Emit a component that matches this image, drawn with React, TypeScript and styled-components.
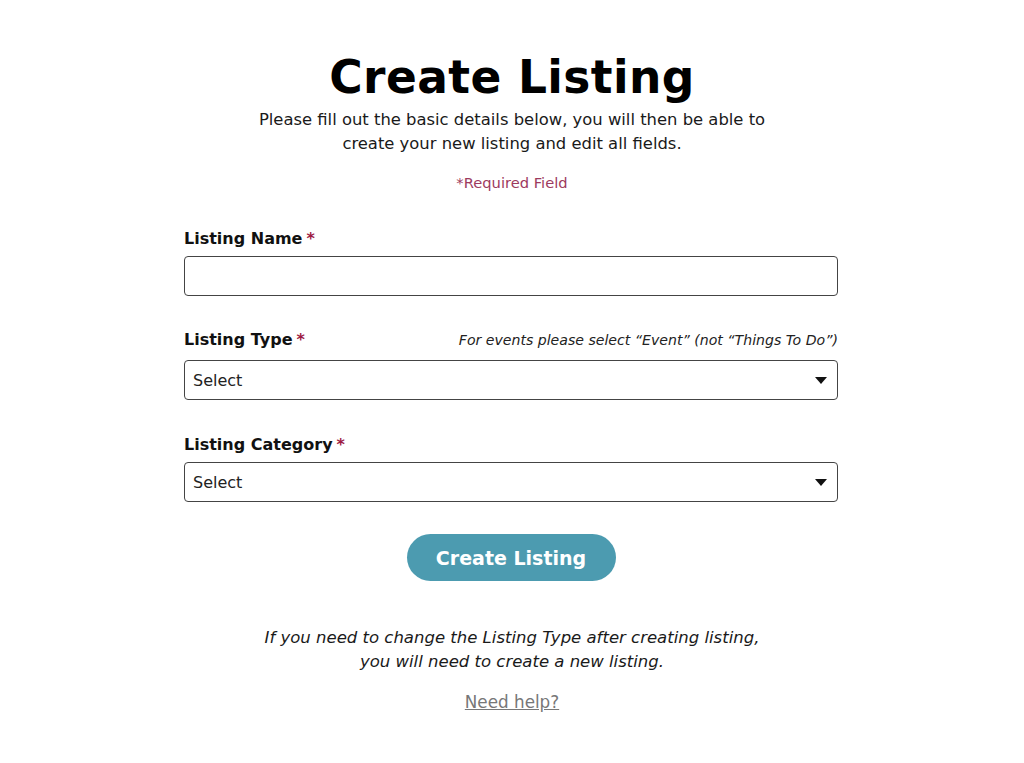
import React from "react";
import styled, { createGlobalStyle } from "styled-components";

const Global = createGlobalStyle`
  html, body { margin: 0; padding: 0; background: #fff; }
  body { font-family: "DejaVu Sans", "Open Sans", sans-serif; color: #111; }
  * { box-sizing: border-box; }
`;

const Page = styled.main`
  display: flex;
  flex-direction: column;
  align-items: center;
  padding-top: 48px;
`;

const Title = styled.h1`
  margin: 0;
  font-size: 45.5px;
  font-weight: 700;
  line-height: 60px;
  color: #000;
  letter-spacing: 0.4px;
`;

const Intro = styled.p`
  margin: 0;
  font-size: 16.4px;
  line-height: 24px;
  text-align: center;
  color: #1a1a1a;
`;

const Required = styled.p`
  margin: 17px 0 0;
  font-size: 14.7px;
  line-height: 20px;
  color: #9d3a5e;
`;

const Form = styled.form`
  width: 654px;
  margin-top: 35px;
  margin-right: 2px;
  display: flex;
  flex-direction: column;
`;

const Field = styled.div<{ $gap?: number }>`
  display: flex;
  flex-direction: column;
  margin-bottom: ${(p) => p.$gap ?? 32}px;
`;

const LabelRow = styled.div<{ $space?: number }>`
  display: flex;
  justify-content: space-between;
  align-items: baseline;
  margin-bottom: ${(p) => p.$space ?? 6}px;
`;

const Label = styled.label`
  font-size: 16px;
  font-weight: 700;
  line-height: 22px;
  color: #111;
`;

const Star = styled.span`
  color: #9d1a44;
  margin-left: 4px;
`;

const Hint = styled.span`
  font-size: 14.1px;
  font-style: italic;
  color: #222;
`;

const TextInput = styled.input`
  height: 40px;
  width: 100%;
  border: 1.5px solid #444;
  border-radius: 4px;
  padding: 0 9px;
  font-family: inherit;
  font-size: 16px;
  background: #fff;
`;

const SelectBox = styled.div`
  position: relative;
  height: 40px;
  border: 1.5px solid #444;
  border-radius: 4px;
  display: flex;
  align-items: center;
  justify-content: space-between;
  padding: 0 10px 0 8px;
  font-size: 16px;
  color: #222;
  background: #fff;
`;

const Caret = styled.span`
  width: 0;
  height: 0;
  border-left: 6px solid transparent;
  border-right: 6px solid transparent;
  border-top: 7px solid #111;
`;

const ButtonRow = styled.div`
  display: flex;
  justify-content: center;
`;

const Button = styled.button`
  width: 209px;
  height: 47px;
  border: none;
  border-radius: 24px;
  background: #4c9bb0;
  color: #fff;
  font-family: inherit;
  font-size: 19px;
  font-weight: 700;
  cursor: pointer;
`;

const Note = styled.p`
  margin: 45px 0 0;
  font-size: 16.5px;
  line-height: 24px;
  font-style: italic;
  text-align: center;
  color: #1a1a1a;
`;

const Help = styled.a`
  margin-top: 17px;
  font-size: 16.8px;
  line-height: 22px;
  color: #777;
  text-decoration: underline;
`;

export default function App() {
  return (
    <>
      <Global />
      <Page>
        <Title>Create Listing</Title>
        <Intro>
          Please fill out the basic details below, you will then be able to
          <br />
          create your new listing and edit all fields.
        </Intro>
        <Required>*Required Field</Required>
        <Form onSubmit={(e) => e.preventDefault()}>
          <Field $gap={33}>
            <LabelRow>
              <Label>
                Listing Name<Star>*</Star>
              </Label>
            </LabelRow>
            <TextInput type="text" />
          </Field>
          <Field $gap={34}>
            <LabelRow $space={9}>
              <Label>
                Listing Type<Star>*</Star>
              </Label>
              <Hint>For events please select “Event” (not “Things To Do”)</Hint>
            </LabelRow>
            <SelectBox>
              <span>Select</span>
              <Caret />
            </SelectBox>
          </Field>
          <Field $gap={32}>
            <LabelRow>
              <Label>
                Listing Category<Star>*</Star>
              </Label>
            </LabelRow>
            <SelectBox>
              <span>Select</span>
              <Caret />
            </SelectBox>
          </Field>
          <ButtonRow>
            <Button type="submit">Create Listing</Button>
          </ButtonRow>
        </Form>
        <Note>
          If you need to change the Listing Type after creating listing,
          <br />
          you will need to create a new listing.
        </Note>
        <Help href="#">Need help?</Help>
      </Page>
    </>
  );
}
